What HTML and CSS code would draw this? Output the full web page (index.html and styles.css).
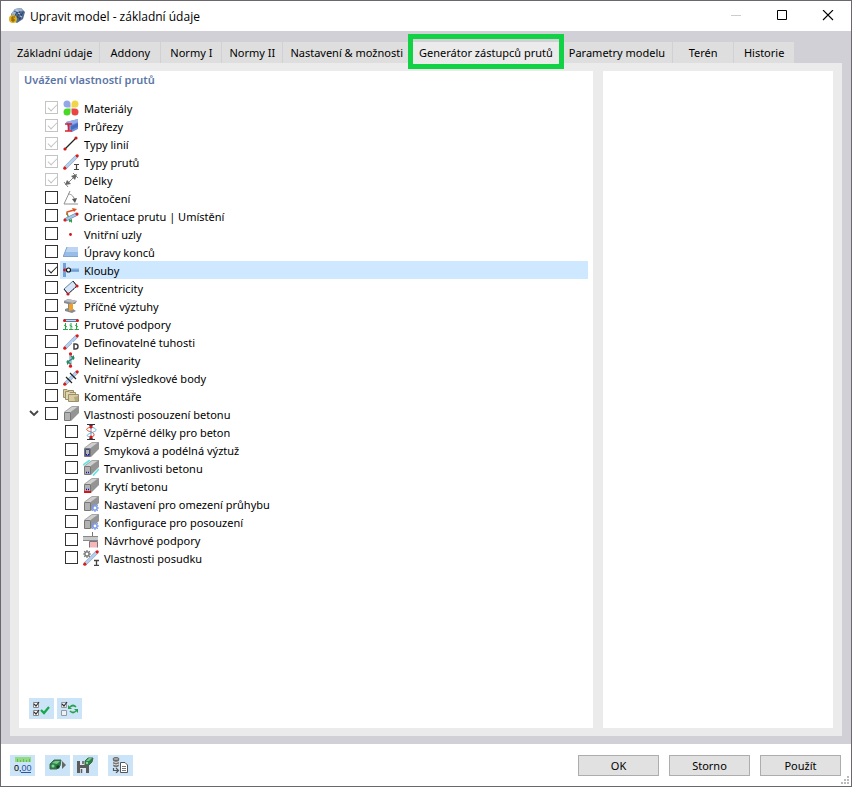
FILE: index.html
```html
<!doctype html>
<html lang="cs">
<head>
    <meta charset="UTF-8">
    <title>Upravit model - základní údaje</title>
    <link rel="stylesheet" href="styles.css">
</head>
<body>
    <svg class="defs" aria-hidden="true">
        <symbol id="block" viewBox="0 0 16 16">
            <path d="M1 6L9 0H16L8 6Z" fill="#cfcfcf"/>
            <path d="M8 6L16 0V7L8 15Z" fill="#949494"/>
            <path d="M1.5 6.5H7.5V14.5H1.5Z" fill="#b2b2b2" stroke="#777"/>
            <path d="M1.5 6L9 .5H15.5L8 6" fill="none" stroke="#8a8a8a" stroke-width=".6"/>
        </symbol>
        <symbol id="gear" viewBox="0 0 8 8">
            <path d="M4 0V8M0 4H8M1.2 1.2L6.8 6.8M6.800 1.2L1.2 6.8" stroke="currentColor" stroke-width="1.2"/>
            <circle cx="4" cy="4" r="2.1" fill="#fff" stroke="currentColor" stroke-width="1.4"/>
        </symbol>
        <symbol id="beam" viewBox="0 0 16 16">
            <path d="M2 14L14 2" stroke="#98a8c0" stroke-width="3.6"/>
            <path d="M2 14L14 2" stroke="#b5d1f2" stroke-width="2.4"/>
            <circle cx="1.8" cy="14.2" r="1.6" fill="#e01818"/>
            <circle cx="14.2" cy="1.8" r="1.6" fill="#e01818"/>
        </symbol>
    </svg>
    <div class="window">
        <header class="titlebar">
            <svg class="logo" viewBox="0 0 16 16">
                <path d="M2 6L6 1L12 0L16 4L14 11L8 15L3 12Z" fill="#50698f"/>
                <path d="M2 6L6 1L12 0L14 3L8 4L5 8Z" fill="#9db5d2"/>
                <path d="M8 4L5 9M11 3L8 10M14 4L10 12M5 3L13 7M4 7L12 11" stroke="#253a5a" stroke-width=".7"/>
                <path d="M9 5L11 6M11 8L13 9M7 2L9 3" stroke="#c4d6ea"/>
                <circle cx="4" cy="11" r="4" fill="#dfae21"/>
                <path d="M6 9H3V13H5V11H3" fill="none" stroke="#7a5a05"/>
            </svg>
            <h1>Upravit model - základní údaje</h1>
            <button class="win-btn" aria-label="Minimalizovat" disabled><svg viewBox="0 0 12 12"><path d="M1 5.5H11" stroke="#ccc"/></svg></button>
            <button class="win-btn" aria-label="Maximalizovat"><svg viewBox="0 0 12 12"><path d="M1.5 .5H10.5V9.5H1.5Z" fill="none" stroke="#000"/></svg></button>
            <button class="win-btn" aria-label="Zavřít"><svg viewBox="0 0 12 12"><path d="M1 0L11 10M11 0L1 10" stroke="#000" stroke-width="1.1"/></svg></button>
        </header>

        <main class="content">
            <nav class="tabs">
                <button>Základní údaje</button>
                <button>Addony</button>
                <button>Normy I</button>
                <button>Normy II</button>
                <button>Nastavení &amp; možnosti</button>
                <button class="active">Generátor zástupců prutů</button>
                <button>Parametry modelu</button>
                <button>Terén</button>
                <button>Historie</button>
            </nav>
            <div class="panel">
                <section class="box">
                    <h2>Uvážení vlastností prutů</h2>
                    <ul class="tree">
                        <li>
                            <input type="checkbox" id="c1" checked disabled>
                            <label for="c1">
                                <svg viewBox="0 0 16 16"><path d="M7.5 7.5H4A3.5 3.5 0 1 1 7.5 4Z" fill="#93a7e8"/><path d="M8.5 7.5V4A3.5 3.5 0 1 1 12 7.5Z" fill="#f0d545"/><path d="M7.5 8.5V12A3.5 3.5 0 1 1 4 8.5Z" fill="#48d825"/><path d="M8.5 8.5H12A3.5 3.5 0 1 1 8.5 12Z" fill="#e84545"/></svg>
                                Materiály
                            </label>
                        </li>
                        <li>
                            <input type="checkbox" id="c2" checked disabled>
                            <label for="c2">
                                <svg viewBox="0 0 16 16"><path d="M3 4L15 1V11L9 14L6 12Z" fill="#6f90dc"/><path d="M3 4L15 1V4L10 6Z" fill="#93aeea"/><path d="M8 8L15 5V9L8 12Z" fill="#4a6cc0"/><path d="M2 6H9M5.500 6V13M2 13H9" stroke="#e0202a" stroke-width="1.6"/></svg>
                                Průřezy
                            </label>
                        </li>
                        <li>
                            <input type="checkbox" id="c3" checked disabled>
                            <label for="c3">
                                <svg viewBox="0 0 16 16"><path d="M2 13L13 2" stroke="#222" stroke-width="1.3"/><circle cx="2" cy="13" r="1.6" fill="#d01818"/><circle cx="13" cy="2" r="1.6" fill="#d01818"/></svg>
                                Typy linií
                            </label>
                        </li>
                        <li>
                            <input type="checkbox" id="c4" checked disabled>
                            <label for="c4">
                                <svg viewBox="0 0 16 16"><use href="#beam"/><path d="M11 10.5H16M13.5 10.5V15.5M11 15.5H16" stroke="#444" stroke-width="1.2"/></svg>
                                Typy prutů
                            </label>
                        </li>
                        <li>
                            <input type="checkbox" id="c5" checked disabled>
                            <label for="c5">
                                <svg viewBox="0 0 16 16"><path d="M4 12L12 4M1 10L5 15M10 1L15 6" stroke="#888"/><path d="M2 13L4 8L8 12ZM14 2L8 4L12 8Z" fill="#666"/></svg>
                                Délky
                            </label>
                        </li>
                        <li>
                            <input type="checkbox" id="c6">
                            <label for="c6">
                                <svg viewBox="0 0 16 16"><path d="M7 1L1 14H15M5 4C9 4 11 7 12 11" fill="none" stroke="#909090"/><path d="M9 9L14 8L12 13Z" fill="#555"/></svg>
                                Natočení
                            </label>
                        </li>
                        <li>
                            <input type="checkbox" id="c7">
                            <label for="c7">
                                <svg viewBox="0 0 16 16"><path d="M4 5L7 14" stroke="#28a04a" stroke-width="1.3"/><path d="M4 7V4L11 2" fill="none" stroke="#e05020" stroke-width="1.4"/><path d="M9 0L14 1L11 4Z" fill="#e05020"/><path d="M2 12L14 6" stroke="#7088aa" stroke-width="3.6"/><path d="M2 12L14 6" stroke="#a8c4eb" stroke-width="2"/><path d="M6 12L9 15L9 11Z" fill="#28a04a"/><circle cx="2" cy="12" r="1.6" fill="#e01818"/><circle cx="14" cy="6" r="1.6" fill="#e01818"/></svg>
                                Orientace prutu | Umístění
                            </label>
                        </li>
                        <li>
                            <input type="checkbox" id="c8">
                            <label for="c8">
                                <svg viewBox="0 0 16 16"><circle cx="7.5" cy="8.5" r="1.4" fill="#d01818"/></svg>
                                Vnitřní uzly
                            </label>
                        </li>
                        <li>
                            <input type="checkbox" id="c9">
                            <label for="c9">
                                <svg viewBox="0 0 16 16"><path d="M4 3H15V13H0Z" fill="#98bce8"/><path d="M4 3H15V8H2Z" fill="#bdd5f2"/><path d="M0 13L4 3M0 12.5H15" stroke="#7da2d2"/></svg>
                                Úpravy konců
                            </label>
                        </li>
                        <li class="selected">
                            <input type="checkbox" id="c10" checked>
                            <label for="c10">
                                <svg viewBox="0 0 16 16"><path d="M0 1H3V15H0Z" fill="#75a0d6"/><path d="M3 6.5H16V9.5H3Z" fill="#82aee0"/><path d="M3 9H16" stroke="#5c8bc4"/><circle cx="1.500" cy="8" r="1.400" fill="#d01818"/><circle cx="5.5" cy="8" r="2" fill="#fff" stroke="#111" stroke-width="1.1"/></svg>
                                Klouby
                            </label>
                        </li>
                        <li>
                            <input type="checkbox" id="c11">
                            <label for="c11">
                                <svg viewBox="0 0 16 16"><path d="M1 9L10 1L14 6L5 14Z" fill="#d6e6f8" stroke="#6681a4"/><path d="M1 9L5 14M10 1L14 6" stroke="#222"/><path d="M5 14L14 6" stroke="#222" stroke-dasharray="2 1"/><circle cx="5" cy="14" r="1.6" fill="#d01818"/><circle cx="14" cy="6" r="1.6" fill="#d01818"/></svg>
                                Excentricity
                            </label>
                        </li>
                        <li>
                            <input type="checkbox" id="c12">
                            <label for="c12">
                                <svg viewBox="0 0 16 16"><path d="M1 3L5 1L14 3L12 6H10V11L13 13L9 15L2 13V11L5 10V6L1 5Z" fill="#858a90"/><path d="M1 3L5 1L14 3L10 5Z" fill="#b8bdc3"/><path d="M6 6L10 5V12L6 13Z" fill="#f0a02a"/></svg>
                                Příčné výztuhy
                            </label>
                        </li>
                        <li>
                            <input type="checkbox" id="c13">
                            <label for="c13">
                                <svg viewBox="0 0 16 16"><path d="M1 4.500H15" stroke="#65799a" stroke-width="3"/><path d="M3 4.500H13" stroke="#c5daf5"/><circle cx="1.5" cy="4.500" r="1.5" fill="#e01818"/><circle cx="14.5" cy="4.500" r="1.5" fill="#e01818"/><path d="M2.5 7V13M8 7V13M13.5 7V13M0 13.500H5M6 13.500H10.5M11.5 13.500H16M1 9L4 11M6.5 9L9.5 11M12 9L15 11" stroke="#2aa54a"/></svg>
                                Prutové podpory
                            </label>
                        </li>
                        <li>
                            <input type="checkbox" id="c14">
                            <label for="c14">
                                <svg viewBox="0 0 16 16"><use href="#beam"/><path d="M9 8H16V16H9Z" fill="#fff"/><path d="M11 10H12.5Q15 10 15 12.5T12.5 15H11Z" fill="#fff" stroke="#444" stroke-width="1.5"/></svg>
                                Definovatelné tuhosti
                            </label>
                        </li>
                        <li>
                            <input type="checkbox" id="c15">
                            <label for="c15">
                                <svg viewBox="0 0 16 16"><path d="M7.5 2V14" stroke="#a0b8d8" stroke-width="2.5"/><path d="M8 4L11 6L4 10L8 12" fill="none" stroke="#278a62" stroke-width="1.2"/><path d="M11 3V8L8 6ZM4 8V13L7 10Z" fill="#278a62"/><circle cx="7.5" cy="1.8" r="1.6" fill="#e01818"/><circle cx="7.5" cy="14.2" r="1.6" fill="#e01818"/></svg>
                                Nelinearity
                            </label>
                        </li>
                        <li>
                            <input type="checkbox" id="c16">
                            <label for="c16">
                                <svg viewBox="0 0 16 16"><use href="#beam"/><path d="M3 7L9 13M7 3L13 9" stroke="#222" stroke-width="1.2"/></svg>
                                Vnitřní výsledkové body
                            </label>
                        </li>
                        <li>
                            <input type="checkbox" id="c17">
                            <label for="c17">
                                <svg viewBox="0 0 16 16"><path d="M.5 1.500H4L5 2.5H10.5V9.5H.5Z" fill="#d8cda2" stroke="#9d9068"/><path d="M2.5 3.500H6L7 4.5H12.5V11.5H2.5Z" fill="#dfd5ae" stroke="#9d9068"/><path d="M5.5 6.5H15.5V13.5H5.5Z" fill="#d8cda2" stroke="#9d9068"/><path d="M11 9L15 8V13H12Z" fill="#b5a87c"/></svg>
                                Komentáře
                            </label>
                        </li>
                        <li>
                            <button class="toggle" aria-label="Sbalit" aria-expanded="true"><svg viewBox="0 0 10 8"><path d="M1 1L5 5L9 1" fill="none" stroke="#444" stroke-width="1.8"/></svg></button>
                            <input type="checkbox" id="c18">
                            <label for="c18">
                                <svg viewBox="0 0 16 16"><use href="#block"/></svg>
                                Vlastnosti posouzení betonu
                            </label>
                            <ul>
                                <li>
                                    <input type="checkbox" id="c19">
                                    <label for="c19">
                                        <svg viewBox="0 0 16 16"><path d="M8 3V13" stroke="#b4cbe8" stroke-width="2"/><path d="M8 3C0 5 5 7 8 8S13 11 8 14" fill="none" stroke="#e04020"/><path d="M9 3C16 6 13 7 8 9S3 12 7 13" fill="none" stroke="#58b7dc"/><path d="M4 .5H12M4 15.500H12" stroke="#333"/><path d="M6 1H10L8 4ZM6 15H10L8 12Z" fill="#333"/><circle cx="8" cy="3" r="1.600" fill="#e01818"/><circle cx="8" cy="13" r="1.600" fill="#e01818"/></svg>
                                        Vzpěrné délky pro beton
                                    </label>
                                </li>
                                <li>
                                    <input type="checkbox" id="c20">
                                    <label for="c20">
                                        <svg viewBox="0 0 16 16"><use href="#block"/><path d="M2.5 7.5H6.5V13.5H2.5Z" fill="none" stroke="#444b80"/><path d="M3 12.5H4M5 12.5H6" stroke="#1010c0" stroke-width="1.2"/></svg>
                                        Smyková a podélná výztuž
                                    </label>
                                </li>
                                <li>
                                    <input type="checkbox" id="c21">
                                    <label for="c21">
                                        <svg viewBox="0 0 16 16"><use href="#block"/><path d="M0 5L7 0M10 15.5L16 9" stroke="#68e3e3" stroke-width="1.8"/><path d="M3 12.5H4M5 12.5H6" stroke="#1010c0" stroke-width="1.3"/></svg>
                                        Trvanlivosti betonu
                                    </label>
                                </li>
                                <li>
                                    <input type="checkbox" id="c22">
                                    <label for="c22">
                                        <svg viewBox="0 0 16 16"><use href="#block"/><path d="M1 14H8" stroke="#e01018" stroke-width="2"/><path d="M3 11.500H4M5 11.500H6" stroke="#1010c0" stroke-width="1.3"/></svg>
                                        Krytí betonu
                                    </label>
                                </li>
                                <li>
                                    <input type="checkbox" id="c23">
                                    <label for="c23">
                                        <svg viewBox="0 0 16 16"><use href="#block"/><use href="#gear" x="8" y="8" width="8" height="8" color="#7d9ae8"/></svg>
                                        Nastavení pro omezení průhybu
                                    </label>
                                </li>
                                <li>
                                    <input type="checkbox" id="c24">
                                    <label for="c24">
                                        <svg viewBox="0 0 16 16"><use href="#block"/><use href="#gear" x="8" y="8" width="8" height="8" color="#7d9ae8"/></svg>
                                        Konfigurace pro posouzení
                                    </label>
                                </li>
                                <li>
                                    <input type="checkbox" id="c25">
                                    <label for="c25">
                                        <svg viewBox="0 0 16 16"><path d="M9.5 0V5" stroke="#777"/><path d="M0 4H15V8H0Z" fill="#c8c8c8"/><path d="M0 4.500H15M0 8.500H15" stroke="#888"/><path d="M6.5 15.5V9.5H14.5V15.5" fill="#f6b5ba" stroke="#777"/></svg>
                                        Návrhové podpory
                                    </label>
                                </li>
                                <li>
                                    <input type="checkbox" id="c26">
                                    <label for="c26">
                                        <svg viewBox="0 0 16 16"><use href="#beam"/><use href="#gear" x="0" y="0" width="8" height="8" color="#777"/><path d="M11 10.5H16M13.5 10.5V15.5M11 15.5H16" stroke="#444" stroke-width="1.3"/></svg>
                                        Vlastnosti posudku
                                    </label>
                                </li>
                            </ul>
                        </li>
                    </ul>
                    <div class="tools">
                        <button aria-label="Vybrat vše"><svg viewBox="0 0 18 16"><path d="M.5 1.5H5.5V6.5H.5ZM.5 9.5H5.5V14.5H.5Z" fill="#fff" stroke="#888"/><path d="M1 3L3 5L6 1M1 11L3 13L6 9" fill="none" stroke="#333" stroke-width="1.2"/><path d="M8 9L11 12L16 6" fill="none" stroke="#16a84a" stroke-width="2.2"/></svg></button>
                        <button aria-label="Obrátit výběr"><svg viewBox="0 0 18 16"><path d="M.5 1.5H5.5V6.5H.5ZM.5 9.5H5.5V14.5H.5Z" fill="#e8f2fb" stroke="#999"/><path d="M1 3L3 5L6 1" fill="none" stroke="#333" stroke-width="1.2"/><path d="M15 6C13 4 11 4 9 6M9 10C11 12 13 12 15 10" fill="none" stroke="#28a050" stroke-width="1.7"/><path d="M7 4V8H11ZM17 12V8H13Z" fill="#28a050"/></svg></button>
                    </div>
                </section>
                <section class="box"></section>
            </div>
        </main>

        <footer class="footer">
            <button class="tool" aria-label="Jednotky"><svg viewBox="0 0 18 16"><path d="M1 0H17V5H1Z" fill="#91dc83"/><path d="M3.5 2V5M6.5 3V5M9.5 2V5M12.5 3V5M15.5 2V5" stroke="#6db463"/><text x="0" y="14">0,<tspan class="blue">00</tspan></text><path d="M7 15.5H17" stroke="#2956a3"/></svg></button>
            <button class="tool gap" aria-label="Převzít"><svg viewBox="0 0 18 16"><path d="M1 7L5 3H12L11 9L8 12H1Z" fill="#2a8046" stroke="#3f6b4a"/><path d="M3 6L6 4H11L8 7Z" fill="#77c68a"/><circle cx="4" cy="9" r="1.5" fill="#8ad19b"/><circle cx="9" cy="10" r="1.7" fill="#173f24"/><path d="M13 4L17 8L13 12Z" fill="#666"/></svg></button>
            <button class="tool" aria-label="Uložit"><svg viewBox="0 0 18 16"><path d="M0 4H11L12 5V16H0Z" fill="#5b5b5b"/><path d="M3 4H8V8H3ZM3 11H9V16H3Z" fill="#dce9f5"/><path d="M6 4V7M4.5 12V16" stroke="#5b5b5b" stroke-width="1.5"/><path d="M8 4L11 1H16L15 5L12 8H8Z" fill="#2a8046" stroke="#3f6b4a"/><path d="M9 4L12 1H15L12 4Z" fill="#77c68a"/><circle cx="10" cy="6" r="1.2" fill="#8ad19b"/></svg></button>
            <button class="tool gap" aria-label="Načíst z databáze"><svg viewBox="0 0 18 16"><path d="M1 2V8C1 11 7 11 7 8V2" fill="#777"/><ellipse cx="4" cy="2" rx="3" ry="1.5" fill="#aaa" stroke="#666"/><path d="M1 4.500Q4 6.500 7 4.500M1 7Q4 9 7 7" fill="none" stroke="#ddd"/><path d="M1.5 11V13.5H6M4 11L6.5 13.5L4 16" fill="none" stroke="#555" stroke-width="1.2"/><path d="M8.5 5.5H13L15.5 8V15.5H8.5Z" fill="#fff" stroke="#555"/><path d="M10 9.500H14M10 11.500H14M10 13.500H14" stroke="#777"/></svg></button>
            <div class="actions">
                <button>OK</button>
                <button>Storno</button>
                <button>Použít</button>
            </div>
            <svg class="grip" viewBox="0 0 8 8"><path d="M6 0H8V2H6ZM3 3H5V5H3ZM6 3H8V5H6ZM0 6H2V8H0ZM3 6H5V8H3ZM6 6H8V8H6Z" fill="#bbb"/></svg>
        </footer>
    </div>
</body>
</html>
```
FILE: styles.css
```css
*{
    box-sizing:border-box;
}
body,ul,h1,h2{
    margin:0;
    padding:0;
}
body,button{
    font-family:"Noto Sans","Open Sans",sans-serif;
    font-size:11px;
    color:#000;
}
button{
    border:0;
    padding:0;
}
svg{
    display:block;
    flex:none;
}
.defs{
    position:absolute;
    width:0;
    height:0;
}
.window{
    display:flex;
    flex-direction:column;
    min-height:100vh;
    border:1px solid #6a686c;
    background:#fff;
}

.titlebar{
    display:flex;
    align-items:center;
    height:30px;
    padding-left:8px;
}
.logo{
    width:16px;
    height:16px;
}
.titlebar h1{
    flex:1;
    margin-left:5px;
    font-family:"Open Sans",sans-serif;
    font-size:12px;
    font-weight:normal;
}
.win-btn{
    display:flex;
    align-items:center;
    justify-content:center;
    width:46px;
    height:28px;
    background:none;
}
.win-btn svg{
    width:12px;
    height:12px;
}

.content{
    flex:1;
    display:flex;
    flex-direction:column;
    padding:11px 9px 8px;
    background:#d1d0d6;
}
.tabs{
    display:flex;
    height:21px;
}
.tabs button{
    min-width:61px;
    padding:0 7px;
    background:#dedede;
    border-right:1px solid #d1d0d6;
    white-space:nowrap;
}
.tabs .active{
    position:relative;
    padding:0 8px;
    background:#ebebeb;
}
.tabs .active:after{
    content:"";
    position:absolute;
    top:-8px;
    bottom:-6px;
    left:-3px;
    right:-3px;
    z-index:1;
    border:5px solid #10d244;
}
.panel{
    flex:1;
    display:grid;
    grid-template-columns:5fr 2fr;
    gap:10px;
    padding:8px 9px;
    background:#ebebeb;
}
.box{
    display:flex;
    flex-direction:column;
    min-width:0;
    padding:0 5px 9px;
    background:#fff;
}
.box h2{
    margin-bottom:10px;
    font-size:11px;
    font-weight:600;
    line-height:18px;
    color:#5b76a6;
}

.tree{
    flex:1;
    padding-left:21px;
}
.tree ul{
    width:100%;
    padding-left:20px;
}
.tree li{
    position:relative;
    display:flex;
    flex-wrap:wrap;
    align-items:flex-start;
}
.tree input{
    appearance:none;
    width:13px;
    height:13px;
    margin:2px 2px 0 0;
    border:1px solid #333;
    background:#fff;
}
.tree input:checked:before{
    content:"";
    display:block;
    width:8px;
    height:4px;
    margin:2px 0 0 2px;
    border-left:1px solid #222;
    border-bottom:1px solid #222;
    transform:rotate(-45deg);
}
.tree input:disabled,
.tree input:disabled:before{
    border-color:#c4c4c4;
}
.tree label{
    flex:1;
    display:flex;
    align-items:center;
    gap:5px;
    height:18px;
    padding-left:3px;
    white-space:nowrap;
}
.tree label svg{
    width:16px;
    height:16px;
}
.selected label{
    background:#cde8ff;
}
.toggle{
    position:absolute;
    left:-16px;
    top:5px;
    background:none;
}
.toggle svg{
    width:10px;
    height:8px;
}

.tools{
    display:flex;
    gap:3px;
    padding-left:5px;
}
.tools button,
.tool{
    display:flex;
    align-items:center;
    justify-content:center;
    width:25px;
    height:21px;
    background:#cce4f7;
}
.tools svg,
.tool svg{
    width:18px;
    height:16px;
}
.tool text{
    font-family:"Liberation Sans",sans-serif;
    font-size:9px;
}
.tool .blue{
    fill:#2956a3;
}

.footer{
    position:relative;
    display:flex;
    align-items:center;
    gap:3px;
    height:42px;
    padding:0 10px 0 9px;
}
.footer .gap{
    margin-left:7px;
}
.actions{
    display:flex;
    gap:10px;
    margin-left:auto;
}
.actions button{
    width:81px;
    height:21px;
    border:1px solid #adadad;
    background:#e1e1e1;
}
.grip{
    position:absolute;
    right:2px;
    bottom:2px;
    width:8px;
    height:8px;
}
```
